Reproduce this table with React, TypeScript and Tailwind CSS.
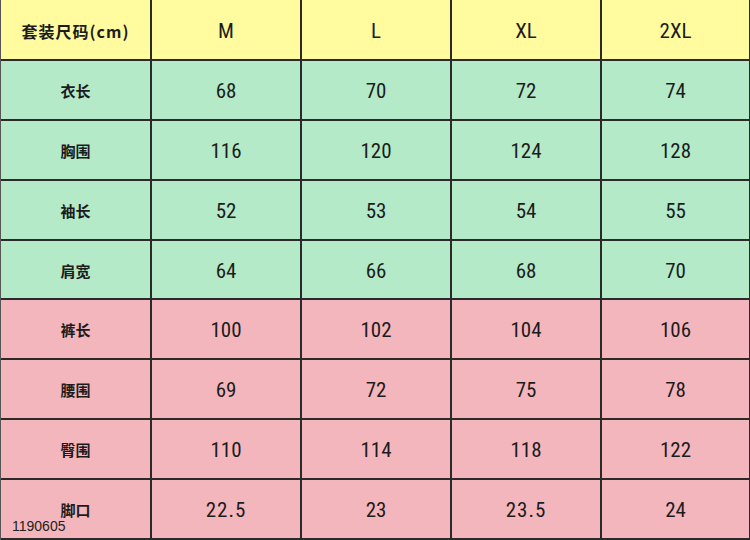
import React from "react";

const sizes = ["M", "L", "XL", "2XL"];
const rows: { label: string; vals: string[]; color: string }[] = [
  { label: "衣长", vals: ["68", "70", "72", "74"], color: "bg-[#b4eac8]" },
  { label: "胸围", vals: ["116", "120", "124", "128"], color: "bg-[#b4eac8]" },
  { label: "袖长", vals: ["52", "53", "54", "55"], color: "bg-[#b4eac8]" },
  { label: "肩宽", vals: ["64", "66", "68", "70"], color: "bg-[#b4eac8]" },
  { label: "裤长", vals: ["100", "102", "104", "106"], color: "bg-[#f4b6bd]" },
  { label: "腰围", vals: ["69", "72", "75", "78"], color: "bg-[#f4b6bd]" },
  { label: "臀围", vals: ["110", "114", "118", "122"], color: "bg-[#f4b6bd]" },
  { label: "脚口", vals: ["22.5", "23", "23.5", "24"], color: "bg-[#f4b6bd]" },
];

const cjk = "font-['Noto_Sans_CJK_SC',sans-serif]";
const num = "font-['Roboto_Condensed','Roboto','Noto_Sans_CJK_SC',sans-serif]";

export default function App() {
  return (
    <div className="relative w-[750px] h-[540px] overflow-hidden bg-white">
      <div className="grid w-[750px] h-[540px] grid-cols-[151px_150px_150px_150px_149px] grid-rows-[61px_60px_60px_60px_59px_60px_60px_60px_60px] border-l border-[#555] text-[#1c1c1c]">
        <div className={`bg-[#fffb9e] border-r-2 border-b-2 border-[#2a2a2a] flex items-center justify-center pt-[3px] ${cjk} text-[16px] font-semibold tracking-[1px]`}>
          套装尺码(cm)
        </div>
        {sizes.map((s) => (
          <div
            key={s}
            className={`bg-[#fffb9e] border-r-2 border-b-2 border-[#2a2a2a] flex items-center justify-center pt-[5px] ${num} text-[21px]`}
          >
            {s}
          </div>
        ))}
        {rows.map((r) => (
          <React.Fragment key={r.label}>
            <div className={`${r.color} border-r-2 border-b-2 border-[#2a2a2a] flex items-center justify-center pt-[3px] ${cjk} text-[15px] font-semibold`}>
              {r.label}
            </div>
            {r.vals.map((v, i) => (
              <div
                key={i}
                className={`${r.color} border-r-2 border-b-2 border-[#2a2a2a] flex items-center justify-center pt-[4px] ${num} text-[21px] ${v.includes(".") ? "tracking-[1px]" : ""}`}
              >
                {v}
              </div>
            ))}
          </React.Fragment>
        ))}
      </div>
      <div className="absolute left-[12px] top-[518px] font-['Liberation_Sans',sans-serif] text-[14px] leading-[16px] text-[#222]">
        1190605
      </div>
    </div>
  );
}
